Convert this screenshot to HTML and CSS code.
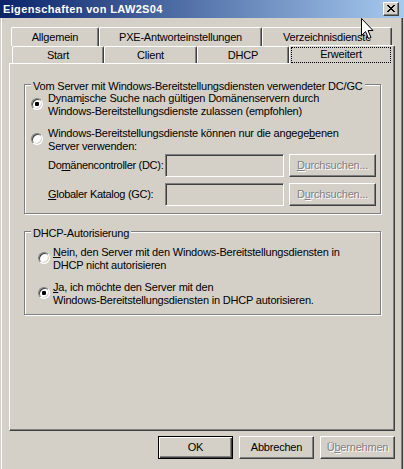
FILE: index.html
```html
<!DOCTYPE html>
<html>
<head>
<meta charset="utf-8">
<link rel="stylesheet" href="styles.css">
</head>
<body>
<div class="window">
  <div class="titlebar">
    <span class="title">Eigenschaften von LAW2S04</span>
    <span class="close">
      <svg width="14" height="12" viewBox="0 0 14 12" shape-rendering="crispEdges">
        <path d="M3 2h2v1H3zM9 2h2v1H9zM4 3h2v1H4zM8 3h2v1H8zM5 4h4v1H5zM6 5h2v1H6zM5 6h4v1H5zM4 7h2v1H4zM8 7h2v1H8zM3 8h2v1H3zM9 8h2v1H9z" fill="#000"/>
      </svg>
    </span>
  </div>
  <div class="client">
    <div class="tabrow back">
      <div class="tab t-allg">Allgemein</div>
      <div class="tab t-pxe">PXE-Antworteinstellungen</div>
      <div class="tab t-verz">Verzeichnisdienste</div>
    </div>
    <div class="tabrow front">
      <div class="tab t-start">Start</div>
      <div class="tab t-client">Client</div>
      <div class="tab t-dhcp">DHCP</div>
      <div class="tab t-erw selected"><div class="focus">Erweitert</div></div>
    </div>
    <div class="panel">
      <div class="group g1">
        <div class="legend">Vom Server mit Windows-Bereitstellungsdiensten verwendeter DC/GC</div>
        <div class="option o1">
          <span class="radio checked"></span>
          <span class="label">Dynam<u>i</u>sche Suche nach gültigen Domänenservern durch<br>Windows-Bereitstellungsdienste zulassen (empfohlen)</span>
        </div>
        <div class="option o2">
          <span class="radio"></span>
          <span class="label">Windows-Bereitstellungsdienste können nur die angege<u>b</u>enen<br>Server verwenden:</span>
        </div>
        <div class="field f1">
          <span class="flabel">Do<u>m</u>änencontroller (DC):</span>
          <span class="textbox"></span>
          <span class="btn browse disabled"><u>D</u>urchsuchen...</span>
        </div>
        <div class="field f2">
          <span class="flabel"><u>G</u>lobaler Katalog (GC):</span>
          <span class="textbox"></span>
          <span class="btn browse disabled">D<u>u</u>rchsuchen...</span>
        </div>
      </div>
      <div class="group g2">
        <div class="legend">DHCP-Autorisierung</div>
        <div class="option o3">
          <span class="radio"></span>
          <span class="label"><u>N</u>ein, den Server mit den Windows-Bereitstellungsdiensten in<br>DHCP nicht autorisieren</span>
        </div>
        <div class="option o4">
          <span class="radio checked"></span>
          <span class="label"><u>J</u>a, ich möchte den Server mit den<br>Windows-Bereitstellungsdiensten in DHCP autorisieren.</span>
        </div>
      </div>
    </div>
    <div class="buttons">
      <span class="btn dlg default">OK</span>
      <span class="btn dlg">Abbrechen</span>
      <span class="btn dlg disabled">Ü<u>b</u>ernehmen</span>
    </div>
  </div>
  <svg class="cursor" width="13" height="22" viewBox="0 0 13 22">
    <path d="M0.5 0.5V17.5L4.5 13.5L7.5 20.5L10 19.5L7 12.5H12Z" fill="#fff" stroke="#000" stroke-width="1" stroke-linejoin="miter"/>
  </svg>
</div>
</body>
</html>
```

FILE: styles.css
```css
* { box-sizing: border-box; }
html, body { margin: 0; padding: 0; background: #D4D0C8; }
u { text-decoration: underline; text-underline-offset: 1px; }

.window {
  width: 404px;
  height: 469px;
  position: relative;
  overflow: hidden;
  background: #D4D0C8;
  font-family: "Liberation Sans", Arial, sans-serif;
  font-size: 11px;
  line-height: 13px;
  letter-spacing: -0.2px;
  color: #000;
}

/* title bar */
.titlebar {
  height: 18px;
  display: flex;
  align-items: center;
  justify-content: space-between;
  padding: 0 5px 0 3px;
  background: linear-gradient(90deg, #0A246A 0%, #A6CAF0 100%);
}
.title { color: #fff; font-weight: bold; letter-spacing: 0.35px; }
.close {
  width: 16px;
  height: 14px;
  background: #D4D0C8;
  border: 1px solid;
  border-color: #fff #404040 #404040 #fff;
  box-shadow: inset -1px -1px 0 #808080;
  display: block;
}
.close svg { display: block; }

/* client area */
.client {
  margin-left: 1px;
  width: 402px;
  height: 451px;
  border-left: 1px solid #fff;
  border-right: 1px solid #404040;
  box-shadow: inset -1px 0 0 #808080;
  padding-top: 9px;
}

/* tabs */
.tabrow { display: flex; }
.back { margin-left: 9px; height: 19px; }
.front { margin-left: 10px; height: 17px; }
.tab {
  height: 100%;
  background: #D4D0C8;
  border-left: 1px solid #fff;
  border-top: 1px solid #fff;
  border-right: 1px solid #404040;
  box-shadow: inset -1px 0 0 #808080;
  border-radius: 2px 2px 0 0;
  text-align: center;
  white-space: nowrap;
}
.back .tab { padding-top: 3px; }
.front .tab { padding-top: 2px; }
.t-allg { width: 88px; }
.t-pxe { width: 163px; }
.t-verz { width: 130px; }
.t-start { width: 92px; }
.t-client { width: 93px; }
.t-dhcp { width: 92px; }
.t-erw { width: 106px; }
.front .tab.selected {
  height: 19px;
  margin-top: -1px;
  padding-top: 0;
  position: relative;
  z-index: 1;
}
.focus {
  height: 16px;
  margin: 1px 3px 0 1px;
  border: 1px dotted #000;
  line-height: 13px;
}

/* panel */
.panel {
  margin-left: 7px;
  width: 386px;
  height: 368px;
  border-top: 1px solid #fff;
  border-left: 1px solid #fff;
  border-right: 1px solid #404040;
  border-bottom: 1px solid #404040;
  box-shadow: inset -1px -1px 0 #808080;
  padding-top: 20px;
}

.group {
  border: 1px solid #808080;
  box-shadow: inset 1px 1px 0 #fff, 1px 1px 0 #fff;
  margin: 0 13px 0 14px;
  padding-bottom: 7px;
}
.g2 { margin-top: 17px; }
.legend {
  width: fit-content;
  background: #D4D0C8;
  padding: 0 2px;
  margin: -5px 0 0 6px;
  white-space: nowrap;
}

.option { display: flex; align-items: flex-start; }
.radio {
  flex: none;
  width: 12px;
  height: 12px;
  margin-top: 6px;
  border-radius: 50%;
  background: #fff;
  border: 1px solid;
  border-color: #808080 #fff #fff #808080;
  box-shadow: inset 1px 1px 0 #404040, inset -1px -1px 0 #D4D0C8;
  display: flex;
  align-items: center;
  justify-content: center;
}
.radio.checked::after {
  content: "";
  width: 4px;
  height: 4px;
  border-radius: 1px;
  background: #000;
}
.label { white-space: nowrap; }

.g1 .option { margin-left: 6px; }
.g1 .option .label { margin-left: 5px; }
.o1 { margin-top: -1px; }
.o2 { margin-top: 9px; }

.g2 .option { margin-left: 13px; }
.g2 .option .label { margin-left: 3px; }
.o3 { margin-top: 6px; }
.o4 { margin-top: 9px; }

.field {
  display: flex;
  align-items: center;
  height: 23px;
  margin-left: 23px;
}
.f1 { margin-top: 1px; }
.f2 { margin-top: 6px; }
.flabel { width: 117px; white-space: nowrap; letter-spacing: -0.3px; }
.textbox {
  width: 119px;
  height: 23px;
  background: #D4D0C8;
  border: 1px solid;
  border-color: #808080 #fff #fff #808080;
  box-shadow: inset 1px 1px 0 #404040, inset -1px -1px 0 #D4D0C8;
}

/* buttons */
.btn {
  display: flex;
  align-items: center;
  justify-content: center;
  height: 23px;
  background: #D4D0C8;
  border: 1px solid;
  border-color: #fff #404040 #404040 #fff;
  box-shadow: inset -1px -1px 0 #808080;
  white-space: nowrap;
}
.btn.disabled { color: #808080; text-shadow: 1px 1px 0 #fff; }
.browse { width: 87px; margin-left: 5px; }

.buttons {
  margin: 5px 0 0 7px;
  width: 386px;
  display: flex;
  justify-content: flex-end;
  gap: 6px;
}
.dlg { width: 75px; }
.btn.default {
  border-color: #000;
  box-shadow: inset 1px 1px 0 #fff, inset -1px -1px 0 #404040, inset -2px -2px 0 #808080;
}

.cursor {
  position: absolute;
  left: 361px;
  top: 18px;
}
```
